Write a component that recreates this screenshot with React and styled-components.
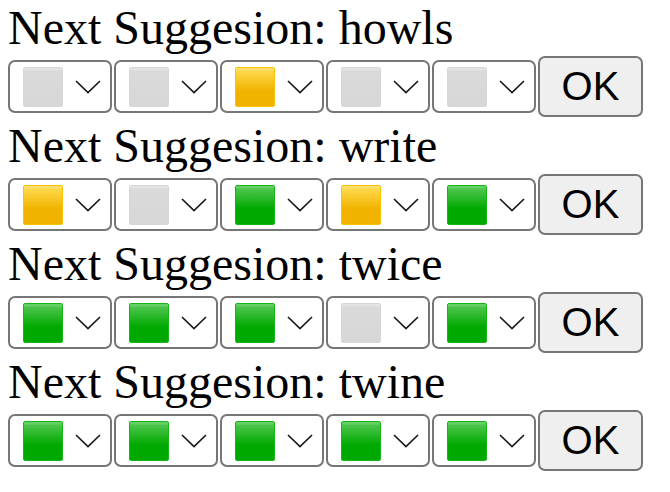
import React from "react";
import styled, { createGlobalStyle } from "styled-components";

const GlobalStyle = createGlobalStyle`
	body {
		margin: 0;
		background: #fff;
	}
`;

const Page = styled.div`
	padding: 1px 0 0 8px;
`;

const Heading = styled.div`
	font-family: "Liberation Serif", "Times New Roman", serif;
	font-size: 48px;
	line-height: 53px;
	color: #000;
	white-space: nowrap;
`;

const Controls = styled.div`
	display: flex;
	align-items: center;
	gap: 2px;
	height: 65px;
`;

const Select = styled.div`
	box-sizing: border-box;
	display: flex;
	align-items: center;
	gap: 12px;
	width: 104px;
	height: 53px;
	padding-left: 13px;
	background: #fff;
	border: 2px solid #767676;
	border-radius: 7px;
`;

const palette = {
	gray: {
		border: "#d7d7d7",
		top: "#dadada",
		bottom: "#d8d8d8",
		shine: "#e3e3e3",
	},
	yellow: {
		border: "#f7c300",
		top: "#ffd84a",
		bottom: "#f1b300",
		shine: "#ffe070",
	},
	green: {
		border: "#16b516",
		top: "#4cc54c",
		bottom: "#00a900",
		shine: "#66d066",
	},
};

const Square = styled.div`
	box-sizing: border-box;
	width: 40px;
	height: 40px;
	border-radius: 2px;
	border: 1px solid ${(p) => palette[p.$tone].border};
	background: linear-gradient(
		to bottom,
		${(p) => palette[p.$tone].shine} 0px,
		${(p) => palette[p.$tone].shine} 2px,
		${(p) => palette[p.$tone].top} 3px,
		${(p) => palette[p.$tone].bottom} 60%
	);
`;

const Button = styled.button`
	box-sizing: border-box;
	width: 105px;
	height: 61px;
	margin: 0;
	padding: 0;
	background: #efefef;
	border: 2px solid #767676;
	border-radius: 7px;
	font-family: "Liberation Sans", Arial, sans-serif;
	font-size: 40px;
	color: #000;
`;

const Chevron = () => (
	<svg width="26" height="14" viewBox="0 0 26 14">
		<polyline
			points="1,1 13,12.5 25,1"
			fill="none"
			stroke="#1a1a1a"
			strokeWidth="1.7"
		/>
	</svg>
);

const rows = [
	{ word: "howls", tones: ["gray", "gray", "yellow", "gray", "gray"] },
	{ word: "write", tones: ["yellow", "gray", "green", "yellow", "green"] },
	{ word: "twice", tones: ["green", "green", "green", "gray", "green"] },
	{ word: "twine", tones: ["green", "green", "green", "green", "green"] },
];

const App = () => {
	return (
		<Page>
			<GlobalStyle />
			{rows.map((row, i) => (
				<div key={i}>
					<Heading>Next Suggesion: {row.word}</Heading>
					<Controls>
						{row.tones.map((tone, j) => (
							<Select key={j}>
								<Square $tone={tone} />
								<Chevron />
							</Select>
						))}
						<Button>OK</Button>
					</Controls>
				</div>
			))}
		</Page>
	);
};

export default App;
